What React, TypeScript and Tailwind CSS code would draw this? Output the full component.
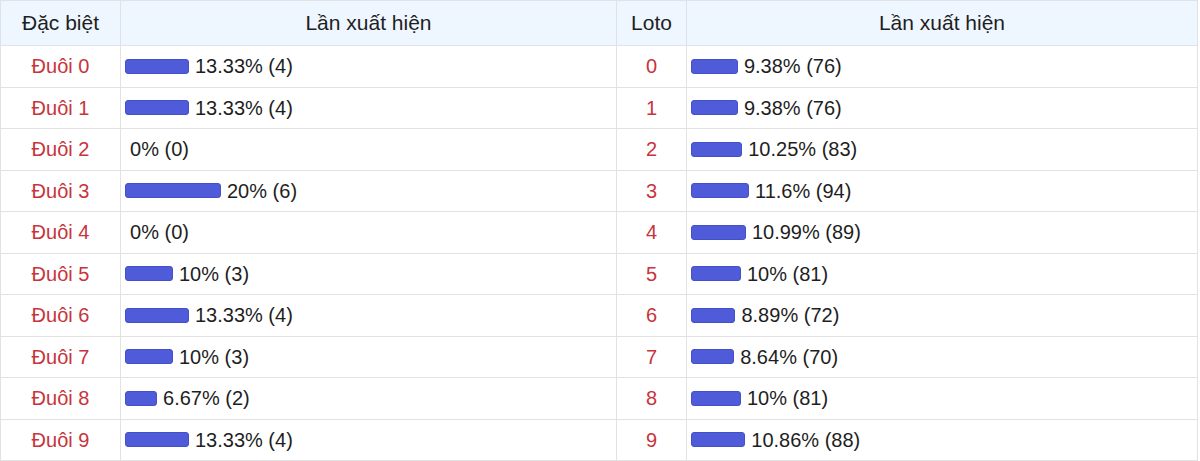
import { FC } from 'react';

type Row = { label: string; pct: number; count: number };

const special: Row[] = [
  { label: 'Đuôi 0', pct: 13.33, count: 4 },
  { label: 'Đuôi 1', pct: 13.33, count: 4 },
  { label: 'Đuôi 2', pct: 0, count: 0 },
  { label: 'Đuôi 3', pct: 20, count: 6 },
  { label: 'Đuôi 4', pct: 0, count: 0 },
  { label: 'Đuôi 5', pct: 10, count: 3 },
  { label: 'Đuôi 6', pct: 13.33, count: 4 },
  { label: 'Đuôi 7', pct: 10, count: 3 },
  { label: 'Đuôi 8', pct: 6.67, count: 2 },
  { label: 'Đuôi 9', pct: 13.33, count: 4 },
];

const loto: Row[] = [
  { label: '0', pct: 9.38, count: 76 },
  { label: '1', pct: 9.38, count: 76 },
  { label: '2', pct: 10.25, count: 83 },
  { label: '3', pct: 11.6, count: 94 },
  { label: '4', pct: 10.99, count: 89 },
  { label: '5', pct: 10, count: 81 },
  { label: '6', pct: 8.89, count: 72 },
  { label: '7', pct: 8.64, count: 70 },
  { label: '8', pct: 10, count: 81 },
  { label: '9', pct: 10.86, count: 88 },
];

const Bar: FC<{ pct: number; scale: number; count: number }> = ({ pct, scale, count }) => (
  <div className="flex items-center">
    {pct > 0 && (
      <span
        className="inline-block h-[15px] rounded-[3px] bg-[#4f5bd8] border border-[#4450c9] mr-[6px]"
        style={{ width: `${pct * scale}px` }}
      ></span>
    )}
    {pct === 0 && <span className="inline-block w-0 mr-[5px]"></span>}
    <span>
      {pct}% ({count})
    </span>
  </div>
);

const App: FC = () => {
  return (
    <div className="w-[1200px] h-[461px] bg-white overflow-hidden">
      <table
        className="w-[1198px] border-collapse table-fixed text-[20px] text-[#1e1e1e]"
        style={{ fontFamily: '"Liberation Sans", Arial, sans-serif' }}
      >
        <colgroup>
          <col className="w-[120px]" />
          <col className="w-[496px]" />
          <col className="w-[70px]" />
          <col />
        </colgroup>
        <thead>
          <tr className="h-[45px] bg-[#eef6ff] text-[21px]">
            <th className="border border-[#dfe3e8] font-normal text-center">Đặc biệt</th>
            <th className="border border-[#dfe3e8] font-normal text-center">Lần xuất hiện</th>
            <th className="border border-[#dfe3e8] font-normal text-center">Loto</th>
            <th className="border border-[#dfe3e8] font-normal text-center">Lần xuất hiện</th>
          </tr>
        </thead>
        <tbody>
          {special.map((s, i) => {
            const l = loto[i];
            return (
              <tr key={s.label} className="h-[41.5px]">
                <td className="border border-[#e2e2e2] text-center text-[#c8343c] p-0">{s.label}</td>
                <td className="border border-[#e2e2e2] pl-1 py-0">
                  <Bar pct={s.pct} scale={4.8} count={s.count} />
                </td>
                <td className="border border-[#e2e2e2] text-center text-[#c8343c] p-0">{l.label}</td>
                <td className="border border-[#e2e2e2] pl-1 py-0">
                  <Bar pct={l.pct} scale={5} count={l.count} />
                </td>
              </tr>
            );
          })}
        </tbody>
      </table>
    </div>
  );
};

export default App;
